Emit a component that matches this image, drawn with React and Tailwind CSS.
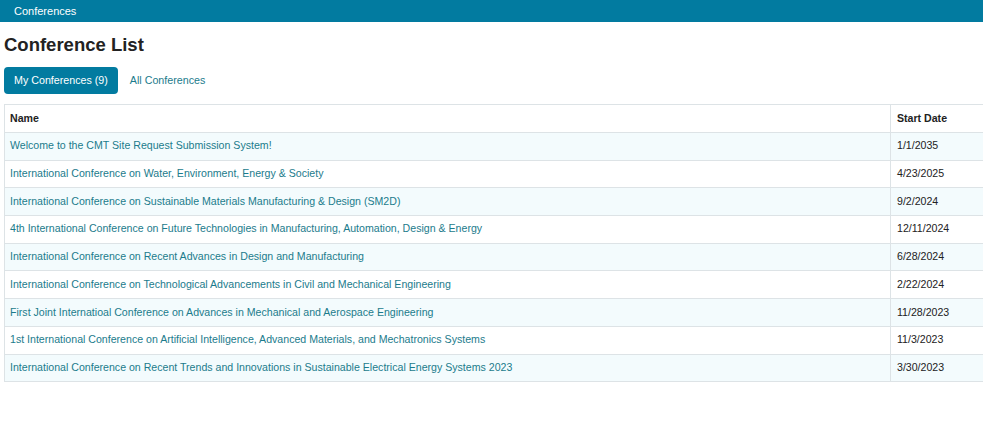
const rows = [
  ["Welcome to the CMT Site Request Submission System!", "1/1/2035"],
  ["International Conference on Water, Environment, Energy & Society", "4/23/2025"],
  ["International Conference on Sustainable Materials Manufacturing & Design (SM2D)", "9/2/2024"],
  ["4th International Conference on Future Technologies in Manufacturing, Automation, Design & Energy", "12/11/2024"],
  ["International Conference on Recent Advances in Design and Manufacturing", "6/28/2024"],
  ["International Conference on Technological Advancements in Civil and Mechanical Engineering", "2/22/2024"],
  ["First Joint Internatioal Conference on Advances in Mechanical and Aerospace Engineering", "11/28/2023"],
  ["1st International Conference on Artificial Intelligence, Advanced Materials, and Mechatronics Systems", "11/3/2023"],
  ["International Conference on Recent Trends and Innovations in Sustainable Electrical Energy Systems 2023", "3/30/2023"],
];

export default function App() {
  return (
    <div className="w-[983px] h-[421px] overflow-hidden bg-white font-['Liberation_Sans',Arial,sans-serif] text-[#222]">
      <div className="h-[22px] bg-[#027ba0] px-[14px] flex items-center text-white text-[11px]">
        Conferences
      </div>

      <div className="px-[4px]">
        <h1 className="mt-[11px] text-[18.5px] font-bold leading-[24px] text-[#222]">Conference List</h1>

        <div className="mt-[10px] flex items-center gap-[12px]">
          <button className="h-[27px] px-[10px] rounded-[4px] bg-[#027ba0] text-white text-[10.7px]">
            My Conferences (9)
          </button>
          <button className="text-[#1b7b8c] text-[10.7px]">All Conferences</button>
        </div>

        <table className="mt-[10px] w-[1000px] border-collapse text-[10.6px]">
          <thead>
            <tr className="h-[28px] bg-white">
              <th className="text-left font-bold px-[5px] border border-[#dde3e6] w-[886px]">Name</th>
              <th className="text-left font-bold px-[6px] border border-[#dde3e6]">Start Date</th>
            </tr>
          </thead>
          <tbody>
            {rows.map((r, i) => (
              <tr key={i} className={i % 2 === 0 ? "h-[27.7px] bg-[#f3fbfd]" : "h-[27.7px] bg-white"}>
                <td className="px-[5px] border border-[#dde3e6] text-[#1b7b8c]">{r[0]}</td>
                <td className="px-[6px] border border-[#dde3e6]">{r[1]}</td>
              </tr>
            ))}
          </tbody>
        </table>
      </div>
    </div>
  );
}
